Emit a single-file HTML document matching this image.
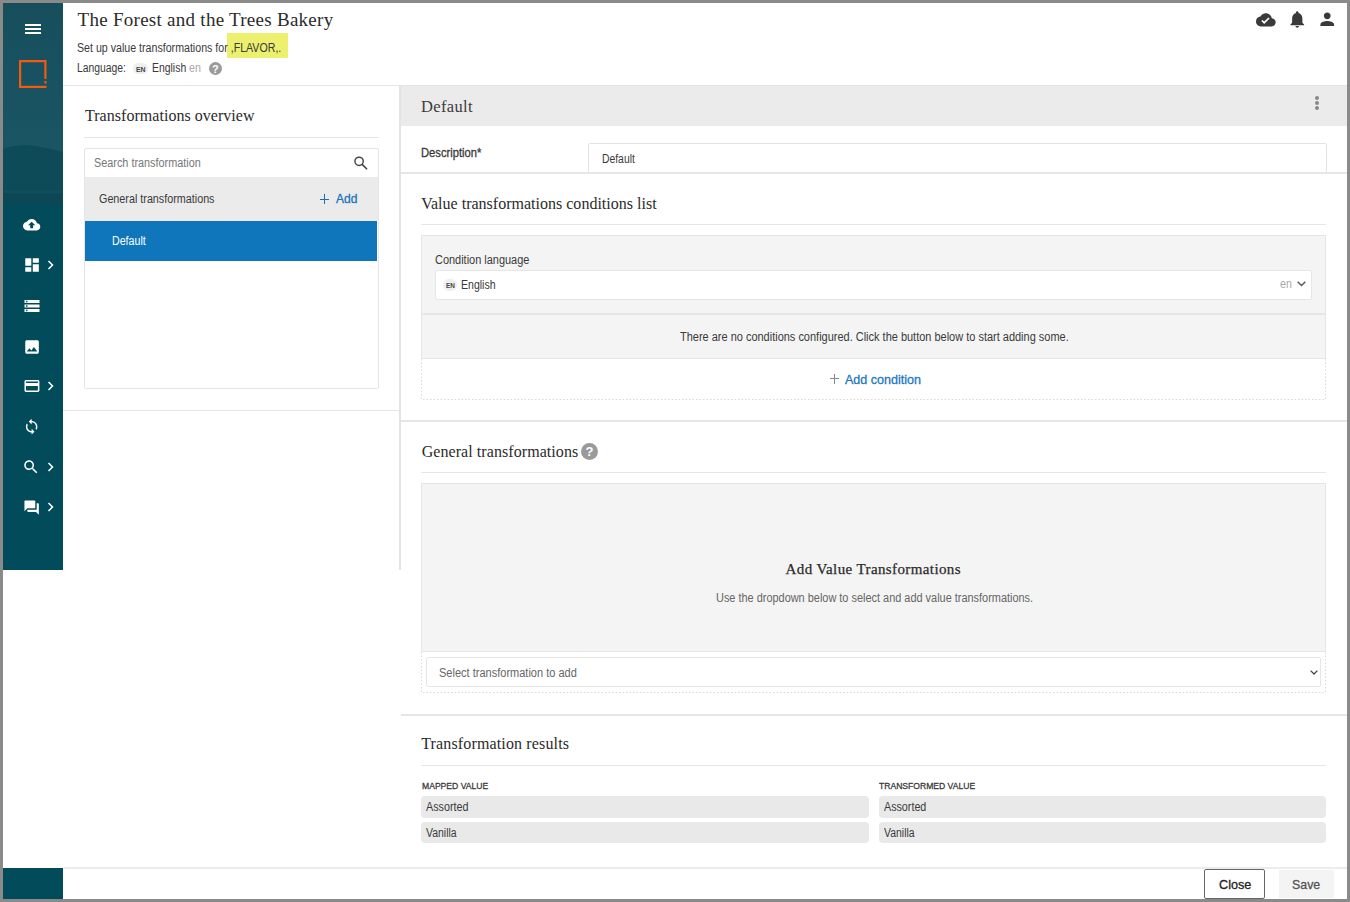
<!DOCTYPE html>
<html><head><meta charset="utf-8">
<style>
*{box-sizing:border-box;margin:0;padding:0}
html,body{width:1350px;height:902px;overflow:hidden;background:#fff}
body{position:relative;font-family:"Liberation Sans",sans-serif;color:#333;font-size:12px}
.a{position:absolute}
.t{position:absolute;white-space:nowrap;line-height:0;transform-origin:0 0}
#frame{position:absolute;left:0;top:0;width:1350px;height:902px;border:3px solid #8a8a8a;z-index:100}
.side{position:absolute;left:3px;width:60px;background:#024b5a}
.ln{position:absolute;background:#e6e6e6}
svg{position:absolute;display:block;overflow:visible}
</style></head><body>
<div id="frame"></div>

<!-- sidebar -->
<div class="side" style="top:3px;height:567px"></div>
<div class="a" style="left:3px;top:3px;width:60px;height:201px;background:linear-gradient(#164e5c,#1a5563 70%,#1d5866)"></div>
<svg style="left:3px;top:140px" width="60" height="64" viewBox="0 0 60 64"><path d="M0 9 C8 6 16 5 24 5 C36 6 48 9 60 12 L60 64 L0 64Z" fill="#0e4b59"/><rect x="0" y="50.5" width="60" height="3" fill="#104f5c"/><rect x="0" y="53.5" width="60" height="10.5" fill="#0b4755"/></svg>
<div class="side" style="top:868px;height:31px"></div>

<!-- hamburger -->
<div class="a" style="left:25px;top:24px;width:16px;height:2px;background:#fff"></div>
<div class="a" style="left:25px;top:28px;width:16px;height:2px;background:#fff"></div>
<div class="a" style="left:25px;top:32px;width:16px;height:2px;background:#fff"></div>
<!-- logo -->
<svg style="left:19px;top:60px" width="28" height="28" viewBox="0 0 28 28"><path d="M1.1 27 V1.1 H26.4 V19" fill="none" stroke="#f35a0c" stroke-width="2.2"/><rect x="0" y="25.8" width="27.5" height="2.2" fill="#f35a0c"/><rect x="25.3" y="21" width="2.2" height="2.5" fill="#f35a0c"/></svg>

<!-- header -->
<div class="a" style="left:227px;top:33px;width:61px;height:25px;background:#ecf06e"></div>
<div class="a" style="left:133px;top:62.5px;width:15px;height:11.5px;border-radius:6px;background:#efefef"></div>
<div class="a" style="left:209px;top:62px;width:13px;height:13px;border-radius:50%;background:#9a9a9a"></div>
<div class="t" style="left:212px;top:68.5px;font-size:11px;font-weight:bold;color:#fff">?</div>

<!-- left panel -->
<div class="ln" style="left:63px;top:85px;width:337px;height:1px"></div>
<div class="ln" style="left:63px;top:410px;width:337px;height:1px"></div>
<div class="ln" style="left:84px;top:137px;width:295px;height:1px"></div>
<div class="a" style="left:84px;top:148px;width:295px;height:241px;border:1px solid #e6e6e6;border-radius:2px"></div>
<svg style="left:340px;top:145px" width="40" height="35" viewBox="340 145 40 35"><circle cx="359.1" cy="161.3" r="4.15" fill="none" stroke="#454545" stroke-width="1.45"/><path d="M362.4 164.6 L366.6 168.8" stroke="#454545" stroke-width="1.6" stroke-linecap="round"/></svg>
<div class="a" style="left:85px;top:177px;width:293px;height:44px;background:#ebebeb"></div>
<div class="a" style="left:320px;top:198.5px;width:9px;height:1.3px;background:#1a6fb3"></div>
<div class="a" style="left:324px;top:194px;width:1.3px;height:9.5px;background:#1a6fb3"></div>
<div class="a" style="left:85px;top:221px;width:292px;height:40px;background:#0f76bc"></div>

<!-- right panel -->
<div class="a" style="left:399px;top:85px;width:2px;height:485px;background:#e3e3e3"></div>
<div class="a" style="left:401px;top:85px;width:946px;height:1px;background:#e3e3e3"></div>
<div class="a" style="left:401px;top:86px;width:946px;height:40px;background:#ebebeb"></div>
<div class="a" style="left:1315px;top:96px;width:4px;height:4px;border-radius:50%;background:#888"></div>
<div class="a" style="left:1315px;top:101px;width:4px;height:4px;border-radius:50%;background:#888"></div>
<div class="a" style="left:1315px;top:106px;width:4px;height:4px;border-radius:50%;background:#888"></div>
<div class="a" style="left:588px;top:143px;width:739px;height:30px;border:1px solid #e3e3e3;border-radius:2px"></div>
<div class="ln" style="left:401px;top:172px;width:946px;height:2px"></div>

<div class="ln" style="left:421px;top:224px;width:905px;height:1px"></div>
<div class="a" style="left:421px;top:235px;width:905px;height:124px;background:#f4f4f4;border:1px solid #e6e6e6"></div>
<div class="a" style="left:435px;top:270px;width:877px;height:30px;background:#fff;border:1px solid #e6e6e6;border-radius:2px"></div>
<div class="a" style="left:443px;top:279px;width:14px;height:12px;border-radius:6px;background:#efefef"></div>
<svg style="left:1297px;top:281px" width="9" height="6" viewBox="0 0 9 6"><path d="M0.7 0.7 L4.5 4.5 L8.3 0.7" fill="none" stroke="#555" stroke-width="1.4"/></svg>
<div class="ln" style="left:421px;top:313px;width:905px;height:2px"></div>

<div class="a" style="left:829.5px;top:378px;width:9px;height:1.1px;background:#888"></div>
<div class="a" style="left:833.5px;top:373.5px;width:1.1px;height:10px;background:#888"></div>
<svg style="left:0;top:0" width="1350" height="902" viewBox="0 0 1350 902"><path d="M421.5 359 V399.5 H1325.5 V359" fill="none" stroke="#dadada" stroke-width="1" stroke-dasharray="1.6 1.9"/></svg>
<div class="ln" style="left:401px;top:420px;width:946px;height:2px"></div>

<div class="a" style="left:581px;top:443px;width:17px;height:17px;border-radius:50%;background:#9a9a9a"></div>
<div class="t" style="left:585.5px;top:452px;font-size:13px;font-weight:bold;color:#fff">?</div>
<div class="ln" style="left:421px;top:472px;width:905px;height:1px"></div>
<div class="a" style="left:421px;top:483px;width:905px;height:169px;background:#f4f4f4;border:1px solid #e6e6e6"></div>

<svg style="left:0;top:0" width="1350" height="902" viewBox="0 0 1350 902"><path d="M421.5 652 V692.5 H1325.5 V652" fill="none" stroke="#dadada" stroke-width="1" stroke-dasharray="1.6 1.9"/></svg>
<div class="a" style="left:426px;top:657px;width:895px;height:30px;border:1px solid #e6e6e6;background:#fff;border-radius:2px"></div>
<svg style="left:1310px;top:669.5px" width="8" height="5" viewBox="0 0 8 5"><path d="M0.6 0.6 L4 4 L7.4 0.6" fill="none" stroke="#444" stroke-width="1.3"/></svg>
<div class="ln" style="left:401px;top:714px;width:946px;height:2px"></div>

<div class="ln" style="left:421px;top:765px;width:905px;height:1px"></div>
<div class="a" style="left:421px;top:796px;width:448px;height:22px;background:#e9e9e9;border-radius:4px"></div>
<div class="a" style="left:421px;top:822px;width:448px;height:21px;background:#e9e9e9;border-radius:4px"></div>
<div class="a" style="left:879px;top:796px;width:447px;height:22px;background:#e9e9e9;border-radius:4px"></div>
<div class="a" style="left:879px;top:822px;width:447px;height:21px;background:#e9e9e9;border-radius:4px"></div>

<!-- footer -->
<div class="ln" style="left:63px;top:867px;width:1284px;height:2px;background:#ececec"></div>
<div class="a" style="left:1204px;top:869px;width:61px;height:30px;border:1px solid #666;border-radius:2px;background:#fff"></div>
<div class="a" style="left:1279px;top:870px;width:55px;height:28px;background:#f4f4f4"></div>

<!-- header icons -->
<svg style="left:1256.3px;top:10.1px" width="19.7" height="19.7" viewBox="0 0 24 24"><path fill="#3a3a3a" d="M19.35 10.04C18.67 6.59 15.64 4 12 4 9.11 4 6.6 5.64 5.35 8.04 2.34 8.36 0 10.91 0 14c0 3.31 2.69 6 6 6h13c2.76 0 5-2.24 5-5 0-2.64-2.05-4.78-4.65-4.96zM10 17l-3.5-3.5 1.41-1.41L10 14.17 15.18 9l1.41 1.41L10 17z"/></svg>
<svg style="left:1286.6px;top:9.2px" width="20.5" height="20.5" viewBox="0 0 24 24"><path fill="#3a3a3a" d="M12 22c1.1 0 2-.9 2-2h-4c0 1.1.89 2 2 2zm6-6v-5c0-3.07-1.64-5.64-4.5-6.32V4c0-.83-.67-1.5-1.5-1.5s-1.5.67-1.5 1.5v.68C7.63 5.36 6 7.92 6 11v5l-2 2v1h16v-1l-2-2z"/></svg>
<svg style="left:1316.6px;top:9.3px" width="20.5" height="20.5" viewBox="0 0 24 24"><path fill="#3a3a3a" d="M12 12c2.21 0 4-1.79 4-4s-1.79-4-4-4-4 1.79-4 4 1.79 4 4 4zm0 2c-2.67 0-8 1.34-8 4v2h16v-2c0-2.66-5.33-4-8-4z"/></svg>

<!-- sidebar icons -->
<svg style="left:22.9px;top:215.9px" width="17.3" height="17.3" viewBox="0 0 24 24"><path fill="#fff" d="M19.35 10.04C18.67 6.59 15.64 4 12 4 9.11 4 6.6 5.64 5.35 8.04 2.34 8.36 0 10.91 0 14c0 3.31 2.69 6 6 6h13c2.76 0 5-2.24 5-5 0-2.64-2.05-4.78-4.65-4.96zM14 13v4h-4v-4H7l5-5 5 5h-3z"/></svg>
<svg style="left:22.5px;top:255.6px" width="18.1" height="18.1" viewBox="0 0 24 24"><path fill="#fff" d="M3 13h8V3H3v10zm0 8h8v-6H3v6zm10 0h8V11h-8v10zm0-18v6h8V3h-8z"/></svg>
<svg style="left:22.6px;top:296.6px" width="18" height="18" viewBox="0 0 24 24"><path fill="#fff" d="M2 20h20v-4H2v4zm2-3h2v2H4v-2zM2 4v4h20V4H2zm4 3H4V5h2v2zm-4 7h20v-4H2v4zm2-3h2v2H4v-2z"/></svg>
<svg style="left:22.5px;top:337.5px" width="18.1" height="18.1" viewBox="0 0 24 24"><path fill="#fff" d="M21 19V5c0-1.1-.9-2-2-2H5c-1.1 0-2 .9-2 2v14c0 1.1.9 2 2 2h14c1.1 0 2-.9 2-2zM8.5 13.5l2.5 3.01L14.5 12l4.5 6H5l3.5-4.5z"/></svg>
<svg style="left:22.6px;top:376.8px" width="17.9" height="17.9" viewBox="0 0 24 24"><path fill="#fff" d="M20 4H4c-1.11 0-1.99.89-1.99 2L2 18c0 1.11.89 2 2 2h16c1.11 0 2-.89 2-2V6c0-1.11-.89-2-2-2zm0 14H4v-6h16v6zm0-10H4V6h16v2z"/></svg>
<svg style="left:22.5px;top:418.3px" width="17.3" height="17.3" viewBox="0 0 24 24"><path fill="#fff" d="M12 4V1L8 5l4 4V6c3.31 0 6 2.69 6 6 0 1.01-.25 1.97-.7 2.8l1.46 1.46C19.54 15.03 20 13.57 20 12c0-4.42-3.58-8-8-8zm0 14c-3.31 0-6-2.69-6-6 0-1.01.25-1.97.7-2.8L5.24 7.74C4.46 8.97 4 10.43 4 12c0 4.42 3.58 8 8 8v3l4-4-4-4v3z"/></svg>
<svg style="left:22.45px;top:457.75px" width="18" height="18" viewBox="0 0 24 24"><path fill="#fff" d="M15.5 14h-.79l-.28-.27C15.41 12.59 16 11.11 16 9.5 16 5.91 13.09 3 9.5 3S3 5.91 3 9.5 5.91 16 9.5 16c1.61 0 3.09-.59 4.23-1.57l.27.28v.79l5 4.99L20.49 19l-4.99-5zm-6 0C7.01 14 5 11.99 5 9.5S7.01 5 9.5 5 14 7.01 14 9.5 11.99 14 9.5 14z"/></svg>
<svg style="left:22.5px;top:498.6px" width="17.3" height="17.3" viewBox="0 0 24 24"><path fill="#fff" d="M21 6h-2v9H6v2c0 .55.45 1 1 1h11l4 4V7c0-.55-.45-1-1-1zm-4 6V3c0-.55-.45-1-1-1H3c-.55 0-1 .45-1 1v14l4-4h10c.55 0 1-.45 1-1z"/></svg>
<svg style="left:47px;top:260px" width="8" height="10" viewBox="0 0 8 10"><path d="M1.5 1 L5.5 5 L1.5 9" fill="none" stroke="#fff" stroke-width="1.5"/></svg>
<svg style="left:47px;top:380.5px" width="8" height="10" viewBox="0 0 8 10"><path d="M1.5 1 L5.5 5 L1.5 9" fill="none" stroke="#fff" stroke-width="1.5"/></svg>
<svg style="left:47px;top:461.5px" width="8" height="10" viewBox="0 0 8 10"><path d="M1.5 1 L5.5 5 L1.5 9" fill="none" stroke="#fff" stroke-width="1.5"/></svg>
<svg style="left:47px;top:501.5px" width="8" height="10" viewBox="0 0 8 10"><path d="M1.5 1 L5.5 5 L1.5 9" fill="none" stroke="#fff" stroke-width="1.5"/></svg>

<div class="t" id="title" style="left:77.60px;top:19.59px;font-family:'Liberation Serif';font-size:19px;color:#2b2b2b;letter-spacing:0.269px">The Forest and the Trees Bakery</div>
<div class="t" id="sub" style="left:77.00px;top:47.64px;font-family:'Liberation Sans';font-size:12px;color:#3a3a3a;transform:scaleX(0.8862)">Set up value transformations for ,FLAVOR,.</div>
<div class="t" id="lang" style="left:77.30px;top:67.74px;font-family:'Liberation Sans';font-size:12px;color:#3a3a3a;transform:scaleX(0.8636)">Language:</div>
<div class="t" id="enb" style="left:136.00px;top:69.50px;font-family:'Liberation Sans';font-weight:bold;font-size:7.5px;color:#444;transform:scaleX(0.9198)">EN</div>
<div class="t" id="english_h" style="left:151.60px;top:67.84px;font-family:'Liberation Sans';font-size:12px;color:#3a3a3a;transform:scaleX(0.8686)">English</div>
<div class="t" id="en_h" style="left:189.30px;top:67.84px;font-family:'Liberation Sans';font-size:12px;color:#aaa;transform:scaleX(0.8916)">en</div>
<div class="t" id="to" style="left:85.00px;top:116.10px;font-family:'Liberation Serif';font-size:16px;color:#2b2b2b;letter-spacing:0.036px">Transformations overview</div>
<div class="t" id="search" style="left:93.80px;top:162.84px;font-family:'Liberation Sans';font-size:12px;color:#777;transform:scaleX(0.9047)">Search transformation</div>
<div class="t" id="gt" style="left:98.80px;top:199.14px;font-family:'Liberation Sans';font-size:12px;color:#3a3a3a;transform:scaleX(0.8973)">General transformations</div>
<div class="t" id="add" style="left:336.00px;top:199.30px;font-family:'Liberation Sans';font-size:13px;color:#1a72b8;transform:scaleX(0.9257);-webkit-text-stroke:0.3px #1a72b8">Add</div>
<div class="t" id="def" style="left:112.30px;top:240.74px;font-family:'Liberation Sans';font-size:12px;color:#fff;transform:scaleX(0.8866)">Default</div>
<div class="t" id="hdef" style="left:421.10px;top:106.63px;font-family:'Liberation Serif';font-size:16.5px;color:#3c3c3c;letter-spacing:0.318px">Default</div>
<div class="t" id="desc" style="left:421.00px;top:152.94px;font-family:'Liberation Sans';font-size:12px;color:#3a3a3a;transform:scaleX(0.9320);-webkit-text-stroke:0.3px #3a3a3a">Description*</div>
<div class="t" id="indef" style="left:601.60px;top:158.74px;font-family:'Liberation Sans';font-size:12px;color:#3a3a3a;transform:scaleX(0.8633)">Default</div>
<div class="t" id="vtcl" style="left:421.20px;top:203.90px;font-family:'Liberation Serif';font-size:16px;color:#2b2b2b;letter-spacing:0.010px">Value transformations conditions list</div>
<div class="t" id="cl" style="left:435.40px;top:259.64px;font-family:'Liberation Sans';font-size:12px;color:#3a3a3a;transform:scaleX(0.9128)">Condition language</div>
<div class="t" id="enb2" style="left:445.50px;top:285.90px;font-family:'Liberation Sans';font-weight:bold;font-size:7.5px;color:#444;transform:scaleX(0.8498)">EN</div>
<div class="t" id="eng2" style="left:461.00px;top:284.74px;font-family:'Liberation Sans';font-size:12px;color:#3a3a3a;transform:scaleX(0.8789)">English</div>
<div class="t" id="en2" style="left:1279.70px;top:284.34px;font-family:'Liberation Sans';font-size:12px;color:#aaa;transform:scaleX(0.8916)">en</div>
<div class="t" id="nocond" style="left:679.60px;top:337.34px;font-family:'Liberation Sans';font-size:12px;color:#3a3a3a;transform:scaleX(0.9148)">There are no conditions configured. Click the button below to start adding some.</div>
<div class="t" id="addcond" style="left:845.00px;top:379.70px;font-family:'Liberation Sans';font-size:13px;color:#1a78be;transform:scaleX(0.9637);-webkit-text-stroke:0.3px #1a78be">Add condition</div>
<div class="t" id="gt2" style="left:421.70px;top:451.50px;font-family:'Liberation Serif';font-size:16px;color:#2b2b2b;letter-spacing:0.067px">General transformations</div>
<div class="t" id="avt" style="left:785.60px;top:568.84px;font-family:'Liberation Serif';font-size:15px;color:#2b2b2b;letter-spacing:0.393px;-webkit-text-stroke:0.25px #2b2b2b">Add Value Transformations</div>
<div class="t" id="use" style="left:715.60px;top:598.44px;font-family:'Liberation Sans';font-size:12px;color:#666;transform:scaleX(0.9107)">Use the dropdown below to select and add value transformations.</div>
<div class="t" id="sel" style="left:439.40px;top:672.54px;font-family:'Liberation Sans';font-size:12px;color:#666;transform:scaleX(0.9183)">Select transformation to add</div>
<div class="t" id="tr" style="left:421.20px;top:743.90px;font-family:'Liberation Serif';font-size:16px;color:#2b2b2b;letter-spacing:0.147px">Transformation results</div>
<div class="t" id="mv" style="left:421.70px;top:786.01px;font-family:'Liberation Sans';font-size:9.5px;color:#3a3a3a;transform:scaleX(0.9043);-webkit-text-stroke:0.3px #3a3a3a">MAPPED VALUE</div>
<div class="t" id="tv" style="left:879.20px;top:785.81px;font-family:'Liberation Sans';font-size:9.5px;color:#3a3a3a;transform:scaleX(0.9028);-webkit-text-stroke:0.3px #3a3a3a">TRANSFORMED VALUE</div>
<div class="t" id="a1" style="left:426.10px;top:806.54px;font-family:'Liberation Sans';font-size:12px;color:#3a3a3a;transform:scaleX(0.8976)">Assorted</div>
<div class="t" id="v1" style="left:426.00px;top:832.54px;font-family:'Liberation Sans';font-size:12px;color:#3a3a3a;transform:scaleX(0.8714)">Vanilla</div>
<div class="t" id="a2" style="left:884.00px;top:806.54px;font-family:'Liberation Sans';font-size:12px;color:#3a3a3a;transform:scaleX(0.8933)">Assorted</div>
<div class="t" id="v2" style="left:884.00px;top:832.54px;font-family:'Liberation Sans';font-size:12px;color:#3a3a3a;transform:scaleX(0.8714)">Vanilla</div>
<div class="t" id="close" style="left:1218.50px;top:884.50px;font-family:'Liberation Sans';font-size:13px;color:#222;transform:scaleX(0.9725);-webkit-text-stroke:0.3px #222">Close</div>
<div class="t" id="save" style="left:1292.00px;top:884.50px;font-family:'Liberation Sans';font-size:13px;color:#555;transform:scaleX(0.9524);-webkit-text-stroke:0.3px #555">Save</div>
</body></html>
